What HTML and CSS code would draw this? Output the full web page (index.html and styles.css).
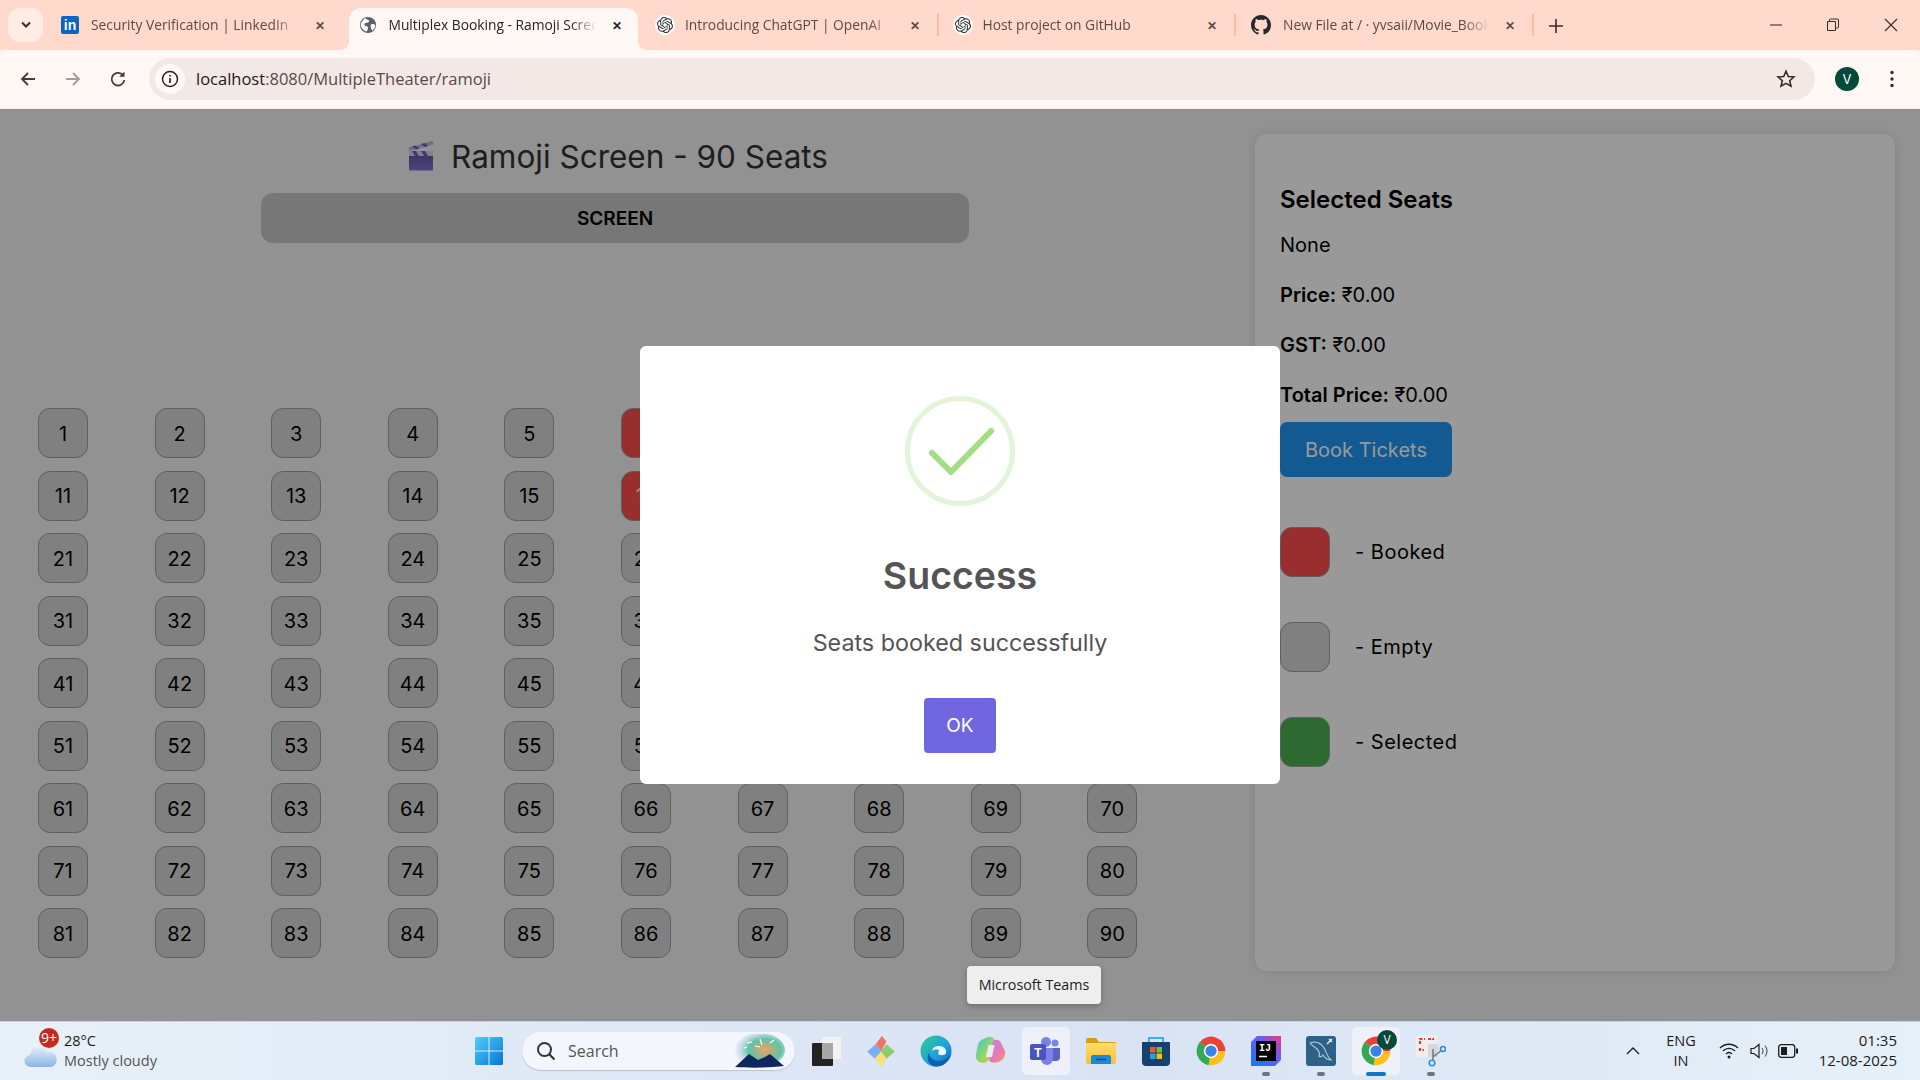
FILE: index.html
```html
<!DOCTYPE html>
<html lang="en">
<head>
    <meta charset="UTF-8">
    <title>Multiplex Booking - Ramoji Screen</title>
    <link rel="stylesheet" href="styles.css">
</head>
<body>
    <svg class="defs" width="0" height="0">
        <defs>
            <symbol id="chrome-logo" viewBox="0 0 48 48">
                <path d="M24 24L6 9.6A23 23 0 0 1 47 24Z" fill="#ea4335"/>
                <path d="M24 24L47 24A23 23 0 0 1 20 46.6Z" fill="#fbc116"/>
                <path d="M24 24L20 46.6A23 23 0 0 1 6 9.6Z" fill="#34a853"/>
                <circle cx="24" cy="24" r="11.5" fill="#fff"/>
                <circle cx="24" cy="24" r="9" fill="#3b82e8"/>
            </symbol>
            <symbol id="globe" viewBox="0 0 20 20">
                <circle cx="10" cy="10" r="9" fill="#5f6368"/>
                <path d="M7 2.500c1 1.500 3 1.500 4 2.500s-1 2.500-2.500 2.500-3 1-2.500 2.500 2.500 1 3.500 2 .5 3-1 5.500C4 16 1.500 12 2 9c1-3 3-5.500 5-6.500zM14 9c1.500-.5 3 0 4 1 0 2.500-1 4.500-3 6-1.500-1-2-3-2-4s0-2.500 1-3z" fill="#fff"/>
            </symbol>
            <symbol id="openai-knot" viewBox="0 0 24 24">
                <path fill="#333" d="M22.2819 9.8211a5.9847 5.9847 0 0 0-.5157-4.9108 6.0462 6.0462 0 0 0-6.5098-2.9A6.0651 6.0651 0 0 0 4.9807 4.1818a5.9847 5.9847 0 0 0-3.9977 2.9 6.0462 6.0462 0 0 0 .7427 7.0966 5.98 5.98 0 0 0 .511 4.9107 6.051 6.051 0 0 0 6.5146 2.9001A5.9847 5.9847 0 0 0 13.2599 24a6.0557 6.0557 0 0 0 5.7718-4.2058 5.9894 5.9894 0 0 0 3.9977-2.9001 6.0557 6.0557 0 0 0-.7475-7.0729zm-9.022 12.6081a4.4755 4.4755 0 0 1-2.8764-1.0408l.1419-.0804 4.7783-2.7582a.7948.7948 0 0 0 .3927-.6813v-6.7369l2.02 1.1686a.071.071 0 0 1 .038.052v5.5826a4.504 4.504 0 0 1-4.4945 4.4944zm-9.6607-4.1254a4.4708 4.4708 0 0 1-.5346-3.0137l.142.0852 4.783 2.7582a.7712.7712 0 0 0 .7806 0l5.8428-3.3685v2.3324a.0804.0804 0 0 1-.0332.0615L9.74 19.9502a4.4992 4.4992 0 0 1-6.1408-1.6464zM2.3408 7.8956a4.485 4.485 0 0 1 2.3655-1.9728V11.6a.7664.7664 0 0 0 .3879.6765l5.8144 3.3543-2.0201 1.1685a.0757.0757 0 0 1-.071 0l-4.8303-2.7865A4.504 4.504 0 0 1 2.3408 7.872zm16.5963 3.8558L13.1038 8.364 15.1192 7.2a.0757.0757 0 0 1 .071 0l4.8303 2.7913a4.4944 4.4944 0 0 1-.6765 8.1042v-5.6772a.79.79 0 0 0-.407-.667zm2.0107-3.0231l-.142-.0852-4.7735-2.7818a.7759.7759 0 0 0-.7854 0L9.409 9.2297V6.8974a.0662.0662 0 0 1 .0284-.0615l4.8303-2.7866a4.4992 4.4992 0 0 1 6.6802 4.66zM8.3065 12.863l-2.02-1.1638a.0804.0804 0 0 1-.038-.0567V6.0742a4.4992 4.4992 0 0 1 7.3757-3.4537l-.142.0805L8.704 5.459a.7948.7948 0 0 0-.3927.6813zm1.0976-2.3654l2.602-1.4998 2.6069 1.4998v2.9994l-2.5974 1.4997-2.6067-1.4997Z"/>
            </symbol>
        </defs>
    </svg>

    <header class="tabstrip">
        <button class="tab-search">
            <svg width="12" height="8" viewBox="0 0 12 8"><path d="M2 1.500l4 4 4-4" fill="none" stroke="#3b2b27" stroke-width="2"/></svg>
        </button>
        <div class="tab">
            <span class="fav fav-linkedin">in</span>
            <span class="tab-title">Security Verification | LinkedIn</span>
            <span class="tab-close">&#10005;</span>
        </div>
        <div class="tab tab-active">
            <svg class="fav" viewBox="0 0 20 20"><use href="#globe"/></svg>
            <span class="tab-title">Multiplex Booking - Ramoji Screen</span>
            <span class="tab-close">&#10005;</span>
        </div>
        <div class="tab tab-sep">
            <span class="fav fav-round"><svg width="16" height="16"><use href="#openai-knot"/></svg></span>
            <span class="tab-title">Introducing ChatGPT | OpenAI</span>
            <span class="tab-close">&#10005;</span>
        </div>
        <div class="tab tab-sep">
            <span class="fav fav-round"><svg width="16" height="16"><use href="#openai-knot"/></svg></span>
            <span class="tab-title">Host project on GitHub</span>
            <span class="tab-close">&#10005;</span>
        </div>
        <div class="tab tab-sep">
            <svg class="fav fav-big" viewBox="0 0 16 16"><path fill="#24292f" d="M8 0C3.58 0 0 3.58 0 8c0 3.54 2.29 6.53 5.47 7.59.4.07.55-.17.55-.38 0-.19-.01-.82-.01-1.49-2.01.37-2.53-.49-2.69-.94-.09-.23-.48-.94-.82-1.13-.28-.15-.68-.52-.01-.53.63-.01 1.08.58 1.23.82.72 1.21 1.87.87 2.33.66.07-.52.28-.87.51-1.07-1.78-.2-3.64-.89-3.64-3.95 0-.87.31-1.59.82-2.15-.08-.2-.36-1.02.08-2.12 0 0 .67-.21 2.2.82.64-.18 1.32-.27 2-.27.68 0 1.36.09 2 .27 1.53-1.04 2.2-.82 2.2-.82.44 1.1.16 1.92.08 2.12.51.56.82 1.27.82 2.15 0 3.07-1.87 3.75-3.65 3.95.29.25.54.73.54 1.48 0 1.07-.01 1.93-.01 2.2 0 .21.15.46.55.38A8.013 8.013 0 0016 8c0-4.42-3.58-8-8-8z"/></svg>
            <span class="tab-title">New File at / · yvsaii/Movie_Booking</span>
            <span class="tab-close">&#10005;</span>
        </div>
        <button class="new-tab">
            <svg width="14" height="14" viewBox="0 0 14 14"><path d="M7 0v14M0 7h14" stroke="#3b2b27" stroke-width="1.600"/></svg>
        </button>
        <div class="window-controls">
            <svg width="12" height="12" viewBox="0 0 12 12"><path d="M0 6h12" stroke="#3b2b27" stroke-width="1.100"/></svg>
            <svg width="14" height="14" viewBox="0 0 14 14"><path d="M3.500 3.500V2a1 1 0 0 1 1-1h7a1 1 0 0 1 1 1v7a1 1 0 0 1-1 1H10M1.500 3.500h8v9h-8z" fill="none" stroke="#3b2b27"/></svg>
            <svg width="14" height="14" viewBox="0 0 14 14"><path d="M1 1l12 12M13 1L1 13" stroke="#3b2b27" stroke-width="1.100"/></svg>
        </div>
    </header>

    <nav class="toolbar">
        <svg class="tool-icon" viewBox="0 0 18 18"><path d="M16 9H3M9 3L3 9l6 6" fill="none" stroke="#4a3a36" stroke-width="1.800"/></svg>
        <svg class="tool-icon" viewBox="0 0 18 18"><path d="M2 9h13M9 3l6 6-6 6" fill="none" stroke="#a89a96" stroke-width="1.800"/></svg>
        <svg class="tool-icon" viewBox="0 0 18 18"><path d="M14.500 6A6.300 6.300 0 1 0 15.300 10" fill="none" stroke="#4a3a36" stroke-width="1.800"/><path d="M15.500 1.500v5.300h-5.300z" fill="#4a3a36"/></svg>
        <div class="omnibox">
            <span class="site-info">
                <svg width="18" height="18" viewBox="0 0 18 18"><circle cx="9" cy="9" r="7.500" fill="none" stroke="#2b2220" stroke-width="1.500"/><path d="M9 8v5M9 5v1.600" stroke="#2b2220" stroke-width="1.700"/></svg>
            </span>
            <span class="url"><span class="url-host">localhost</span>:8080/MultipleTheater/ramoji</span>
            <svg class="star" width="20" height="20" viewBox="0 0 20 20"><path d="M10 2.300l2.300 5.200 5.600.5-4.200 3.700 1.300 5.500-5-2.900-5 2.900 1.300-5.500L2.100 8l5.600-.5z" fill="none" stroke="#3b2b27" stroke-width="1.600"/></svg>
        </div>
        <span class="avatar">V</span>
        <svg class="menu-dots" width="4" height="18" viewBox="0 0 4 18"><circle cx="2" cy="2.500" r="1.700" fill="#3b2b27"/><circle cx="2" cy="9" r="1.700" fill="#3b2b27"/><circle cx="2" cy="15.500" r="1.700" fill="#3b2b27"/></svg>
    </nav>

    <main class="page">
        <section class="booking">
            <h1 class="screen-title">
                <svg class="clapper" width="26" height="30" viewBox="0 0 26 30">
                    <defs><linearGradient id="clapper-body" x1="0" y1="0" x2="0" y2="1"><stop offset="0" stop-color="#5f5a9f"/><stop offset="1" stop-color="#8474d6"/></linearGradient></defs>
                    <path d="M1 14h24v14.500a1 1 0 0 1-1 1H2a1 1 0 0 1-1-1z" fill="url(#clapper-body)"/>
                    <path d="M1 10h24v5H1z" fill="#d9d3f3"/>
                    <path d="M4 10l3 5h4l-3-5zM13 10l3 5h4l-3-5z" fill="#6a5fbc"/>
                    <path d="M0.500 6.500L24.500 0l1 3.500L1.500 10z" fill="#bdb2ea"/>
                    <path d="M4 5.500l4 3 3.500-1-4-3zM13 3l4 3 3.500-1-4-3z" fill="#6a5fbc"/>
                </svg>
                <span>Ramoji Screen - 90 Seats</span>
            </h1>
            <div class="screen-bar">SCREEN</div>
            <div class="seat-grid">
                <button class="seat">1</button><button class="seat">2</button><button class="seat">3</button><button class="seat">4</button><button class="seat">5</button><button class="seat seat-booked">6</button><button class="seat">7</button><button class="seat">8</button><button class="seat">9</button><button class="seat">10</button>
                <button class="seat">11</button><button class="seat">12</button><button class="seat">13</button><button class="seat">14</button><button class="seat">15</button><button class="seat seat-booked">16</button><button class="seat">17</button><button class="seat">18</button><button class="seat">19</button><button class="seat">20</button>
                <button class="seat">21</button><button class="seat">22</button><button class="seat">23</button><button class="seat">24</button><button class="seat">25</button><button class="seat">26</button><button class="seat">27</button><button class="seat">28</button><button class="seat">29</button><button class="seat">30</button>
                <button class="seat">31</button><button class="seat">32</button><button class="seat">33</button><button class="seat">34</button><button class="seat">35</button><button class="seat">36</button><button class="seat">37</button><button class="seat">38</button><button class="seat">39</button><button class="seat">40</button>
                <button class="seat">41</button><button class="seat">42</button><button class="seat">43</button><button class="seat">44</button><button class="seat">45</button><button class="seat">46</button><button class="seat">47</button><button class="seat">48</button><button class="seat">49</button><button class="seat">50</button>
                <button class="seat">51</button><button class="seat">52</button><button class="seat">53</button><button class="seat">54</button><button class="seat">55</button><button class="seat">56</button><button class="seat">57</button><button class="seat">58</button><button class="seat">59</button><button class="seat">60</button>
                <button class="seat">61</button><button class="seat">62</button><button class="seat">63</button><button class="seat">64</button><button class="seat">65</button><button class="seat">66</button><button class="seat">67</button><button class="seat">68</button><button class="seat">69</button><button class="seat">70</button>
                <button class="seat">71</button><button class="seat">72</button><button class="seat">73</button><button class="seat">74</button><button class="seat">75</button><button class="seat">76</button><button class="seat">77</button><button class="seat">78</button><button class="seat">79</button><button class="seat">80</button>
                <button class="seat">81</button><button class="seat">82</button><button class="seat">83</button><button class="seat">84</button><button class="seat">85</button><button class="seat">86</button><button class="seat">87</button><button class="seat">88</button><button class="seat">89</button><button class="seat">90</button>
            </div>
        </section>

        <aside class="summary">
            <h2>Selected Seats</h2>
            <p class="seat-list">None</p>
            <p><strong>Price:</strong> ₹0.00</p>
            <p><strong>GST:</strong> ₹0.00</p>
            <p class="total"><strong>Total Price:</strong> ₹0.00</p>
            <button class="book-btn">Book Tickets</button>
            <ul class="legend">
                <li><span class="seat-swatch swatch-booked"></span>- Booked</li>
                <li><span class="seat-swatch"></span>- Empty</li>
                <li><span class="seat-swatch swatch-selected"></span>- Selected</li>
            </ul>
        </aside>

        <!-- alert on top of the page -->
        <div class="overlay">
            <div class="modal">
                <svg class="success-icon" width="110" height="110" viewBox="0 0 110 110">
                    <circle cx="55" cy="55" r="52.500" fill="none" stroke="#e4f4db" stroke-width="5"/>
                    <path d="M27 57L46 76L86 35" fill="none" stroke="#a5dc86" stroke-width="6" stroke-linecap="round" stroke-linejoin="round"/>
                </svg>
                <h2 class="modal-title">Success</h2>
                <p class="modal-text">Seats booked successfully</p>
                <button class="modal-ok">OK</button>
            </div>
        </div>
    </main>

    <footer class="taskbar">
        <div class="weather">
            <svg class="cloud" width="34" height="24" viewBox="0 0 34 24">
                <defs><linearGradient id="cloud-fill" x1="0" y1="0" x2="0" y2="1"><stop offset="0" stop-color="#e2edfa"/><stop offset="1" stop-color="#8db5e6"/></linearGradient></defs>
                <path d="M7 23a6 6 0 0 1-1-12 9 9 0 0 1 17-3 7.500 7.500 0 0 1 4 15z" fill="url(#cloud-fill)"/>
            </svg>
            <span class="badge">9+</span>
            <div class="weather-text">
                <span class="temp">28°C</span>
                <span class="sky">Mostly cloudy</span>
            </div>
        </div>

        <svg class="start" width="30" height="30" viewBox="0 0 30 30">
            <defs><linearGradient id="win-fill" x1="0" y1="0" x2="1" y2="1"><stop offset="0" stop-color="#4fd0fb"/><stop offset="1" stop-color="#0674d4"/></linearGradient></defs>
            <path d="M1 2.500A1.500 1.500 0 0 1 2.500 1h12v13.500H1zM15.500 1h12A1.500 1.500 0 0 1 29 2.500v12H15.500zM1 15.500h13.500V29h-12A1.500 1.500 0 0 1 1 27.500zM15.500 15.500H29v12a1.500 1.500 0 0 1-1.500 1.500h-12z" fill="url(#win-fill)"/>
        </svg>

        <div class="search">
            <svg width="20" height="20" viewBox="0 0 20 20"><circle cx="8.500" cy="8.500" r="6.500" fill="none" stroke="#333" stroke-width="2"/><path d="M13 13l5.500 5.500" stroke="#333" stroke-width="2.200"/></svg>
            <span class="search-label">Search</span>
            <svg class="search-art" width="52" height="34" viewBox="0 0 52 34">
                <defs><radialGradient id="art-glow" cx=".6" cy=".5" r=".6"><stop offset="0" stop-color="#f2a15f"/><stop offset=".55" stop-color="#5dc4a8"/><stop offset="1" stop-color="#c9c6ee" stop-opacity=".2"/></radialGradient></defs>
                <ellipse cx="27" cy="16" rx="25" ry="17" fill="url(#art-glow)"/>
                <path d="M2 33L16 20l9 6 7-3 5-3 14 12c-16 2-34 2-49 1z" fill="#10265e"/>
                <path d="M14 9l5-1M27 5l2 6M37 9l4-3M22 12l5 1M11 14l3-1" stroke="#fff" stroke-width="1.200"/>
            </svg>
        </div>

        <div class="task-icons">
            <span class="task-item">
                <svg width="30" height="30" viewBox="0 0 30 30"><rect x="11" y="1" width="19" height="22" rx="1" fill="#f2f2f2"/><rect x="1" y="7" width="21" height="23" rx="1" fill="#222"/><rect x="11" y="7" width="11" height="16" fill="#a8a8a8"/></svg>
            </span>
            <span class="task-item">
                <svg width="28" height="31" viewBox="0 0 30 34"><path d="M15 17L9 9l7-9 5 6z" fill="#e9766b"/><path d="M15 17l6-8 9 8-9 8z" fill="#8ccb6e"/><path d="M15 17l6 8-6 9-7-9z" fill="#f9e07a"/><path d="M15 17l-7 8-8-8 9-8z" fill="#78aef2"/></svg>
            </span>
            <span class="task-item">
                <svg width="32" height="32" viewBox="0 0 32 32">
                    <defs><linearGradient id="edge-fill" x1="0" y1="0" x2="1" y2="1"><stop offset="0" stop-color="#2fcf8d"/><stop offset=".6" stop-color="#1e9de0"/><stop offset="1" stop-color="#0c5aa8"/></linearGradient></defs>
                    <circle cx="16" cy="16" r="15.500" fill="url(#edge-fill)"/>
                    <path d="M31 19c-2 8-9 12.500-14 12.500C8 31.500 6 23 9 18c1 5 5 8 10 8 5 0 9-3 12-7z" fill="#0d5fb0"/>
                    <path d="M12 17c0-4 3-6 7-6 4.500 0 8 3 7 7-1 3-8 3-8 0 0-1 1-1 1-2 0-2-7-2-7 1z" fill="#eaf7ff"/>
                </svg>
            </span>
            <span class="task-item">
                <svg width="32" height="32" viewBox="0 0 32 32">
                    <defs><linearGradient id="copilot-a" x1="0" y1="0" x2="1" y2="1"><stop offset="0" stop-color="#33c2ee"/><stop offset=".5" stop-color="#8ad66a"/><stop offset="1" stop-color="#f4c542"/></linearGradient><linearGradient id="copilot-b" x1="0" y1="0" x2="1" y2="1"><stop offset="0" stop-color="#c77be8"/><stop offset=".6" stop-color="#e87bb0"/><stop offset="1" stop-color="#f79a5d"/></linearGradient></defs>
                    <path d="M11 3c3-2 8-2 8 2l-4 17c-1 4-4 6-7 6-5 0-8-4-7-9l2-9c1-4 4-6 8-7z" fill="url(#copilot-a)"/>
                    <path d="M19 5c3-1 6 0 7 3l4 8c1 5-2 10-7 11-3 1-8 1-9-2l3-15c0-2 1-4 2-5z" fill="url(#copilot-b)"/>
                    <path d="M13.500 10h6l-2.500 12h-6z" fill="#e6eefa"/>
                </svg>
            </span>
            <span class="task-item task-active">
                <svg width="32" height="28" viewBox="0 0 32 28">
                    <circle cx="25" cy="6" r="3.500" fill="#7b83eb"/><circle cx="16" cy="5" r="5" fill="#7b83eb"/>
                    <path d="M21 11h9v9a4 4 0 0 1-4 4h-5z" fill="#5a62c8"/>
                    <path d="M9 11h14v11a6 6 0 0 1-12 0z" fill="#7b83eb"/>
                    <rect x="0" y="7" width="16" height="16" rx="2" fill="#4b53bc"/>
                    <text class="teams-t" x="8" y="20">T</text>
                </svg>
            </span>
            <span class="task-item">
                <svg width="30" height="26" viewBox="0 0 30 26">
                    <defs><linearGradient id="folder-fill" x1="0" y1="0" x2="0" y2="1"><stop offset="0" stop-color="#ffdc6b"/><stop offset="1" stop-color="#fbbf2c"/></linearGradient></defs>
                    <path d="M0 2a2 2 0 0 1 2-2h8l3 4h15a2 2 0 0 1 2 2v4H0z" fill="#d69c14"/>
                    <path d="M0 5h28a2 2 0 0 1 2 2v17a2 2 0 0 1-2 2H2a2 2 0 0 1-2-2z" fill="url(#folder-fill)"/>
                    <path d="M5 19a2 2 0 0 1 2-2h16a2 2 0 0 1 2 2v7H5z" fill="#1a8ad9"/>
                    <path d="M10 21.500h10" stroke="#0b4a85" stroke-width="1.500"/>
                </svg>
            </span>
            <span class="task-item">
                <svg width="30" height="30" viewBox="0 0 30 30">
                    <path d="M8 6V2h14v4" fill="none" stroke="#35b6e8" stroke-width="2"/>
                    <path d="M1 6h28v20a4 4 0 0 1-4 4H5a4 4 0 0 1-4-4z" fill="#17406f"/>
                    <rect x="9" y="11" width="5.500" height="5.500" fill="#ea5a2f"/><rect x="15.500" y="11" width="5.500" height="5.500" fill="#7dbb3a"/>
                    <rect x="9" y="17.500" width="5.500" height="5.500" fill="#1fa3e8"/><rect x="15.500" y="17.500" width="5.500" height="5.500" fill="#fbb91e"/>
                </svg>
            </span>
            <span class="task-item"><svg width="30" height="30"><use href="#chrome-logo"/></svg></span>
            <span class="task-item task-running">
                <svg width="30" height="30" viewBox="0 0 30 30">
                    <defs><linearGradient id="ij-fill" x1="0" y1="1" x2="1" y2="0"><stop offset="0" stop-color="#0a7bff"/><stop offset=".6" stop-color="#6a5cf0"/><stop offset="1" stop-color="#f0397f"/></linearGradient></defs>
                    <path d="M6 0h24v24l-6 6H0V6z" fill="url(#ij-fill)"/>
                    <rect x="5" y="5" width="20" height="20" fill="#000"/>
                    <text class="ij-text" x="8" y="15">IJ</text>
                    <path d="M8 20.500h8" stroke="#fff" stroke-width="1.500"/>
                </svg>
            </span>
            <span class="task-item task-running">
                <svg width="30" height="30" viewBox="0 0 30 30">
                    <rect width="30" height="30" rx="3" fill="#2d6186"/>
                    <path d="M4 7c6-2 11 0 14 5s3 9 7 12c-4 0-6-2-8-5-1 2-3 2-4 1 1-2 0-5-2-7S6 10 4 7z" fill="none" stroke="#a9c6d9" stroke-width="1.200"/>
                    <path d="M21 8l5-5M23 3l3 3" stroke="#dfeaf1" stroke-width="1.500"/>
                </svg>
            </span>
            <span class="task-item task-active task-current">
                <svg width="30" height="30"><use href="#chrome-logo"/></svg>
                <span class="chrome-badge">V</span>
            </span>
            <span class="task-item task-running">
                <svg width="30" height="32" viewBox="0 0 30 32">
                    <rect x="0" y="0" width="22" height="22" rx="2" fill="#eeeeee"/>
                    <path d="M4 9V4h5M12 4h5v1M4 13v2h4" fill="none" stroke="#d8402a" stroke-width="2.200" stroke-dasharray="3 1.500"/>
                    <rect x="12" y="9" width="10" height="13" fill="#d7d7d7"/>
                    <path d="M17 14v12M17 22l9-7" stroke="#777" stroke-width="1.500"/>
                    <circle cx="27" cy="14" r="2.500" fill="none" stroke="#2b90d9" stroke-width="1.600"/>
                    <circle cx="16" cy="28" r="2.800" fill="none" stroke="#2b90d9" stroke-width="1.600"/>
                </svg>
            </span>
        </div>

        <div class="tray">
            <svg class="tray-chevron" width="14" height="8" viewBox="0 0 14 8"><path d="M1 7l6-6 6 6" fill="none" stroke="#1c1c1c" stroke-width="1.300"/></svg>
            <div class="lang"><span>ENG</span><span>IN</span></div>
            <svg class="tray-wifi" width="20" height="18" viewBox="0 0 20 18"><path d="M1 6c5-5 13-5 18 0M4 9c3.500-3.500 8.500-3.500 12 0M7 12c2-2 4-2 6 0" fill="none" stroke="#1c1c1c" stroke-width="1.300"/><circle cx="10" cy="15" r="1.500" fill="#1c1c1c"/></svg>
            <svg class="tray-sound" width="20" height="18" viewBox="0 0 20 18"><path d="M2 6.500h3L10 2.500v13l-5-4H2z" fill="none" stroke="#1c1c1c" stroke-width="1.200"/><path d="M13 6c1.300 1.800 1.300 4.200 0 6M16 3.500c2.500 3.300 2.500 7.700 0 11" fill="none" stroke="#555" stroke-width="1.100"/></svg>
            <svg class="tray-battery" width="20" height="14" viewBox="0 0 20 14"><rect x=".7" y=".7" width="16" height="12.600" rx="2.500" fill="none" stroke="#1c1c1c" stroke-width="1.300"/><rect x="3" y="3" width="6" height="8" fill="#1c1c1c"/><rect x="18" y="4.500" width="2" height="5" fill="#1c1c1c"/></svg>
            <div class="clock"><span>01:35</span><span>12-08-2025</span></div>
        </div>
    </footer>

    <div class="tooltip">Microsoft Teams</div>
</body>
</html>
```

FILE: styles.css
```css
/* General Styles */
* {
    box-sizing: border-box;
}
html, body {
    margin: 0;
    padding: 0;
    width: 1920px;
    height: 1080px;
    overflow: hidden;
}
body {
    display: flex;
    flex-direction: column;
    position: relative;
    font-family: "Inter", "Noto Sans", sans-serif;
    background-color: #f4f4f4;
}
button {
    font-family: inherit;
    border: none;
    padding: 0;
}
.defs {
    position: absolute;
}

/* Browser tabs */
.tabstrip {
    height: 50px;
    flex-shrink: 0;
    display: flex;
    align-items: flex-end;
    padding-left: 8px;
    background-color: #ffd9cc;
    font-family: "Open Sans", "Noto Sans", sans-serif;
    font-size: 13.8px;
    color: #5c4a45;
}
.tab-search {
    width: 35px;
    height: 34px;
    margin-right: 6px;
    margin-bottom: 8px;
    border-radius: 12px;
    background-color: #ffece5;
    display: flex;
    align-items: center;
    justify-content: center;
}
.tab {
    position: relative;
    width: 297.5px;
    height: 42px;
    padding: 0 20px 8px 12px;
    display: flex;
    align-items: center;
}
.tab-sep::after {
    content: "";
    position: absolute;
    right: 3px;
    top: 6px;
    width: 2px;
    height: 22px;
    background-color: #ffb8a2;
}
.tab-active {
    color: #2b2220;
}
.tab-active::before {
    content: "";
    position: absolute;
    left: 2px;
    right: 6px;
    top: 0;
    bottom: 0;
    background-color: #fff8f5;
    border-radius: 12px 12px 0 0;
}
/* curved feet of the active tab */
.tab-active::after {
    content: "";
    position: absolute;
    left: -8px;
    right: -4px;
    bottom: 0;
    height: 10px;
    background:
        radial-gradient(circle at 0 0, transparent 10px, #fff8f5 10.5px) left bottom / 10px 10px no-repeat,
        radial-gradient(circle at 100% 0, transparent 10px, #fff8f5 10.5px) right bottom / 10px 10px no-repeat;
}
.fav, .tab-title, .tab-close {
    position: relative;
}
.fav {
    width: 18px;
    height: 18px;
    flex-shrink: 0;
}
.fav-big {
    width: 20px;
    height: 20px;
}
.fav-linkedin {
    background-color: #0a66c2;
    color: #fff;
    font-family: "Liberation Sans", sans-serif;
    font-weight: 700;
    font-size: 14px;
    line-height: 19px;
    text-align: center;
    border-radius: 2px;
}
.fav-round {
    width: 20px;
    height: 20px;
    margin-left: -1px;
    border-radius: 50%;
    background-color: #fff;
    display: flex;
    align-items: center;
    justify-content: center;
}
.tab-title {
    flex: 1;
    margin: 0 14px 2px 12px;
    white-space: nowrap;
    overflow: hidden;
    -webkit-mask-image: linear-gradient(to right, #000 88%, transparent);
    mask-image: linear-gradient(to right, #000 88%, transparent);
}
.fav-round + .tab-title {
    margin-left: 10px;
}
.tab-close {
    width: 14px;
    font-size: 12px;
    font-weight: 700;
    text-align: center;
}
.new-tab {
    width: 14px;
    height: 14px;
    margin-left: 12px;
    margin-bottom: 17px;
    background: none;
    display: flex;
}
.window-controls {
    margin-left: auto;
    margin-bottom: 18px;
    display: flex;
    align-items: center;
    gap: 44px;
    padding-right: 22px;
}

/* Browser toolbar */
.toolbar {
    height: 59px;
    flex-shrink: 0;
    display: flex;
    align-items: center;
    padding: 0 26px 1px 19px;
    background-color: #fff8f5;
    border-radius: 10px 10px 0 0;
    border-bottom: 1px solid #ffe9e0;
}
.tool-icon {
    width: 18px;
    height: 18px;
    margin-right: 27px;
}
.tool-icon:nth-of-type(3) {
    margin-right: 22px;
}
.omnibox {
    flex: 1;
    height: 42px;
    margin-right: 20px;
    border-radius: 21px;
    background-color: #f2e8e6;
    display: flex;
    align-items: center;
    padding: 0 19px 0 6px;
    font-family: "Open Sans", "Noto Sans", sans-serif;
    font-size: 16.5px;
    color: #5c4a45;
}
.site-info {
    width: 30px;
    height: 30px;
    border-radius: 50%;
    background-color: #fff8f5;
    display: flex;
    align-items: center;
    justify-content: center;
    margin-right: 11px;
}
.url-host {
    color: #1f1816;
}
.star {
    margin-left: auto;
}
.avatar {
    width: 24px;
    height: 24px;
    border-radius: 50%;
    background-color: #04493a;
    color: #fff;
    font-size: 13px;
    line-height: 24px;
    text-align: center;
    margin-right: 31px;
}

/* Page */
.page {
    position: relative;
    flex: 1;
    min-height: 0;
    display: flex;
}
.booking {
    width: 1230px;
    padding-top: 23px;
}
.screen-title {
    margin: 0 0 13px;
    padding-left: 6px;
    height: 48px;
    display: flex;
    align-items: center;
    justify-content: center;
    gap: 17px;
    font-size: 31.5px;
    font-weight: 400;
    color: #333;
}
.screen-bar {
    width: 708px;
    height: 50px;
    margin: 0 auto;
    padding-top: 1px;
    border-radius: 12px;
    background-color: #c6c6c6;
    text-align: center;
    line-height: 50px;
    font-size: 19px;
    font-weight: 600;
    color: #000;
}
.seat-grid {
    margin: 165px 0 0 38px;
    display: grid;
    grid-template-columns: repeat(10, 50px);
    grid-auto-rows: 50px;
    column-gap: 66.6px;
    row-gap: 12.5px;
}
.seat {
    padding-top: 1px;
    border: 1px solid #9e9e9e;
    border-radius: 12px;
    background-color: #d6d6d6;
    font-size: 20px;
    color: #000;
}
.seat-booked {
    background-color: #ff4d4d;
    color: #fff;
}

/* Summary panel */
.summary {
    width: 640px;
    height: 837px;
    margin: 25px 0 0 25px;
    padding: 50px 25px 0;
    background-color: #fff;
    border-radius: 12px;
    box-shadow: 0 0 12px rgba(0, 0, 0, 0.1);
    font-size: 20px;
    color: #000;
}
.summary h2 {
    margin: 0 0 14px;
    font-size: 24px;
    line-height: 32px;
    font-weight: 600;
}
.summary p {
    margin: 0 0 20px;
    line-height: 30px;
}
.summary strong {
    font-weight: 600;
}
.summary .total {
    margin-bottom: 12px;
}
.book-btn {
    display: block;
    width: 172px;
    height: 55px;
    border-radius: 7px;
    background-color: #2196f3;
    color: #fff;
    font-size: 20px;
}
.legend {
    list-style: none;
    margin: 50px 0 0;
    padding: 0;
    display: flex;
    flex-direction: column;
    gap: 45px;
    letter-spacing: 0.5px;
}
.legend li {
    display: flex;
    align-items: center;
}
.seat-swatch {
    width: 50px;
    height: 50px;
    margin-right: 25px;
    border: 1px solid #9e9e9e;
    border-radius: 12px;
    background-color: #d6d6d6;
}
.swatch-booked {
    background-color: #ff4d4d;
}
.swatch-selected {
    background-color: #4caf50;
}

/* Alert */
.overlay {
    position: absolute;
    inset: 0;
    background-color: rgba(0, 0, 0, 0.4);
    display: flex;
    align-items: center;
    justify-content: center;
}
.modal {
    width: 640px;
    height: 438px;
    padding-top: 50px;
    border-radius: 6px;
    background-color: #fff;
    display: flex;
    flex-direction: column;
    align-items: center;
    color: #545454;
}
.modal-title {
    margin: 48px 0 0;
    font-size: 37.5px;
    line-height: 44px;
    font-weight: 600;
}
.modal-text {
    margin: 28px 0 0;
    font-size: 23.3px;
    line-height: 34px;
}
.modal-ok {
    width: 72px;
    height: 55px;
    margin-top: 38px;
    border-radius: 4px;
    background-color: #7066e0;
    color: #fff;
    font-size: 19px;
}

/* Windows taskbar */
.taskbar {
    height: 59px;
    flex-shrink: 0;
    display: flex;
    align-items: center;
    border-top: 1px solid #c9d3e0;
    background: linear-gradient(90deg, #e8f1f8 0%, #dbe5f5 45%, #d9e3f4 60%, #e6f0f8 100%);
    font-family: "Open Sans", "Noto Sans", sans-serif;
}
.weather {
    position: relative;
    width: 474px;
    height: 100%;
    flex-shrink: 0;
    padding-left: 64px;
    display: flex;
    align-items: center;
}
.cloud {
    position: absolute;
    left: 24px;
    top: 22px;
}
.badge {
    position: absolute;
    left: 39px;
    top: 6px;
    width: 20px;
    height: 20px;
    border-radius: 50%;
    background-color: #c42b1c;
    color: #fff;
    font-size: 14px;
    line-height: 20px;
    text-align: center;
}
.weather-text, .lang, .clock {
    display: flex;
    flex-direction: column;
    font-size: 14.5px;
    line-height: 20px;
    color: #1c1c1c;
}
.weather-text .sky {
    color: #555;
}
.start {
    flex-shrink: 0;
}
.search {
    width: 273px;
    height: 38px;
    margin-left: 18px;
    padding: 0 10px 0 14px;
    border-radius: 19px;
    background-color: #f3f6fd;
    box-shadow: 0 1px 1px #b7c2d6;
    display: flex;
    align-items: center;
    flex-shrink: 0;
}
.search-label {
    margin-left: 12px;
    font-size: 16px;
    color: #555;
}
.search-art {
    margin-left: auto;
}
.task-icons {
    display: flex;
    margin-left: 3.5px;
}
.task-item {
    position: relative;
    width: 48px;
    height: 48px;
    margin: 0 3.5px;
    border-radius: 5px;
    display: flex;
    align-items: center;
    justify-content: center;
}
.task-active {
    background-color: #eef1fa;
}
.task-running::after, .task-current::after {
    content: "";
    position: absolute;
    bottom: -1px;
    left: 20px;
    width: 8px;
    height: 4px;
    border-radius: 2px;
    background-color: #6b7280;
}
.task-current::after {
    left: 14px;
    width: 20px;
    background-color: #0a78d4;
}
.teams-t {
    font-family: "Liberation Sans", sans-serif;
    font-weight: 700;
    font-size: 12px;
    fill: #fff;
    text-anchor: middle;
}
.ij-text {
    font-family: "Liberation Mono", monospace;
    font-weight: 700;
    font-size: 10px;
    fill: #fff;
}
.chrome-badge {
    position: absolute;
    right: 3px;
    top: 3px;
    width: 20px;
    height: 20px;
    border-radius: 50%;
    background-color: #04493a;
    color: #fff;
    font-size: 12px;
    line-height: 20px;
    text-align: center;
}
.tray {
    flex: 1;
    display: flex;
    align-items: center;
    justify-content: flex-end;
    padding-right: 23px;
}
.tray-chevron {
    margin-right: 26px;
}
.lang {
    align-items: center;
    margin-right: 23px;
}
.tray-wifi {
    margin-right: 10px;
}
.tray-sound {
    margin-right: 9px;
}
.tray-battery {
    margin-right: 21px;
}
.clock {
    align-items: flex-end;
    padding-bottom: 2px;
    font-size: 15px;
}

/* Tooltip of the taskbar icon */
.tooltip {
    position: absolute;
    left: 967px;
    top: 966px;
    width: 134px;
    height: 38px;
    border-radius: 4px;
    background-color: #eeeeee;
    box-shadow: 0 2px 6px rgba(0, 0, 0, 0.25);
    font-family: "Open Sans", "Noto Sans", sans-serif;
    font-size: 14.3px;
    line-height: 38px;
    text-align: center;
    color: #1c1c1c;
}
```
